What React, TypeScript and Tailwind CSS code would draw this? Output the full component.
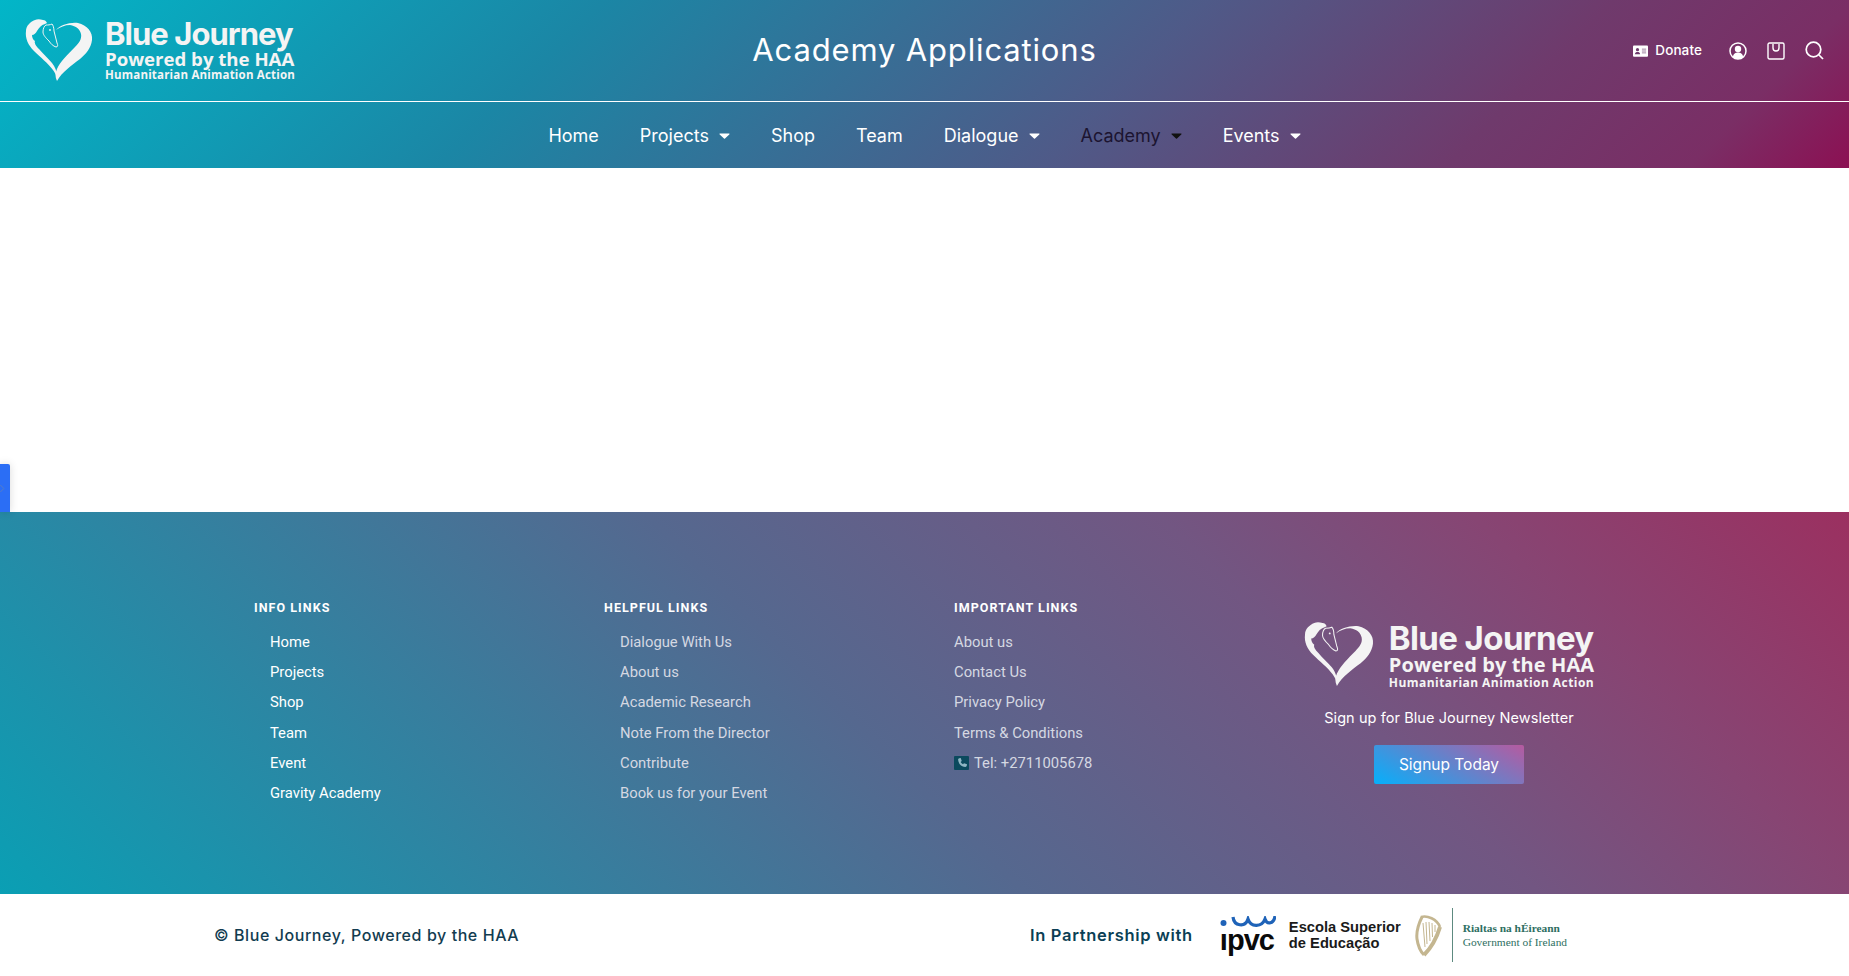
import React from "react";

const sans = "font-['Inter','Liberation_Sans',sans-serif]";

function Heart({ className }: { className: string }) {
  return (
    <svg viewBox="15 9 68 63" className={className}>
      <path fill="#f4f4f4" d="M46 20C50 15 60 12 68 13C77 15 83 22 82 30C81 38 76 44 70 49C62 55 52 62 47 71C45 67 45 63 47 59C50 52 58 44 65 37C69 33 72 29 71 24C70 19 66 16 60 15C55 15 50 17 46 20Z" />
      <path fill="#f4f4f4" d="M33 10C30 9 27 9 25 10C20 12 16 16 16 21C15 28 18 35 24 41C30 47 38 53 43 60C45 63 46 65 47 67C47 61 45 57 42 53C38 48 33 44 29 39C26 36 24 33 25 31C23 30 22 27 22 25C24 25 26 23 27 21C29 18 31 15 35 14L37 13C36 11 35 10 33 10Z" />
      <path fill="none" stroke="#f4f4f4" strokeWidth="1" d="M36 15C34 16 33 19 33 22C33 25 36 28 39 31C41 34 43 36 46 37C48 37 48 35 47 33C46 29 45 25 44 21C44 18 43 15 42 14C40 15 38 15 36 15Z" />
      <circle cx="40" cy="20" r="0.9" fill="#f4f4f4" />
    </svg>
  );
}

function Logo({ large }: { large?: boolean }) {
  return (
    <div className={large ? "flex items-start gap-[15px]" : "flex items-start gap-[12px]"}>
      <Heart className={large ? "h-[65px] w-[70px]" : "h-[63px] w-[68px]"} />
      <div className="flex flex-col text-[#f4f4f4]">
        <span
          className={
            large
              ? "font-['Inter',sans-serif] text-[33px] leading-[33px] font-bold tracking-[-0.6px] whitespace-nowrap"
              : "font-['Inter',sans-serif] text-[31px] leading-[30px] font-bold tracking-[-0.95px] whitespace-nowrap"
          }
        >
          Blue Journey
        </span>
        <span
          className={
            large
              ? "font-['Open_Sans',sans-serif] text-[20px] leading-[20px] font-bold tracking-[0.1px] whitespace-nowrap"
              : "font-['Open_Sans',sans-serif] text-[18.6px] leading-[19px] font-bold whitespace-nowrap"
          }
        >
          Powered by the HAA
        </span>
        <span
          className={
            large
              ? "font-['Open_Sans',sans-serif] text-[12px] leading-[15px] font-bold tracking-[0.45px] whitespace-nowrap"
              : "font-['Open_Sans',sans-serif] text-[11.5px] leading-[14px] font-bold tracking-[0.2px] whitespace-nowrap"
          }
        >
          Humanitarian Animation Action
        </span>
      </div>
    </div>
  );
}

function Caret({ dark }: { dark?: boolean }) {
  return (
    <svg viewBox="0 0 10 6" className="h-[6px] w-[11px]" fill={dark ? "#111" : "#fff"}>
      <path d="M0.6 0.4H9.4C10 0.4 10.2 1 9.8 1.4L5.5 5.6C5.2 5.9 4.8 5.9 4.5 5.6L0.2 1.4C-0.2 1 0 0.4 0.6 0.4Z" />
    </svg>
  );
}

function NavItem({ label, caret, dark }: { label: string; caret?: boolean; dark?: boolean }) {
  return (
    <a className={dark ? "flex items-center gap-[10px] text-[#1c1430]" : "flex items-center gap-[10px] text-white"}>
      <span>{label}</span>
      {caret && <Caret dark={dark} />}
    </a>
  );
}

function Column({ title, links, indent, muted, phone }: { title: string; links: string[]; indent?: boolean; muted?: boolean; phone?: boolean }) {
  return (
    <div className="flex flex-col">
      <h4 className="font-['Roboto',sans-serif] text-[12.5px] leading-[16px] font-bold tracking-[1.05px] text-white">{title}</h4>
      <ul className={indent ? "mt-[11px] flex flex-col pl-[16px]" : "mt-[11px] flex flex-col"}>
        {links.map((l) => (
          <li
            key={l}
            className={
              muted
                ? "font-['Roboto',sans-serif] text-[14.8px] leading-[30.2px] text-[#d5d8e2]"
                : "font-['Roboto',sans-serif] text-[14.8px] leading-[30.2px] text-white"
            }
          >
            {l}
          </li>
        ))}
        {phone && (
          <li className="flex items-center gap-[5px] font-['Roboto',sans-serif] text-[14.8px] leading-[30.2px] text-[#d5d8e2]">
            <span className="flex h-[14px] w-[15px] items-center justify-center rounded-[1px] bg-[#0b4a5e]">
              <svg viewBox="0 0 24 24" className="h-[12px] w-[12px]" fill="#8fb6c4">
                <path d="M6.6 2.5 9.4 2 11.5 8 9.3 10c1 2 2.7 3.7 4.7 4.7l2-2.2 6 2.1-.5 2.8c-.3 1.5-1.6 2.6-3.2 2.4C10.2 19 5 13.800 4.200 5.700 4 4.100 5.100 2.800 6.600 2.500Z" />
              </svg>
            </span>
            Tel: +2711005678
          </li>
        )}
      </ul>
    </div>
  );
}

export default function App() {
  return (
    <div className="relative flex min-h-[976px] w-full flex-col overflow-hidden bg-white">
      <header className="flex h-[168px] flex-col bg-[linear-gradient(135deg,#02b6c8_0%,#1b86a5_30%,#4f5a88_60%,#6f3a6c_80%,#7a2e65_92%,#8c1053_100%)]">
        <div className="flex h-[102px] items-center justify-between border-b border-white pr-[25px] pl-[25px]">
          <div className="w-[400px]">
            <Logo />
          </div>
          <h1 className={`${sans} text-[31px] font-normal tracking-[0.85px] whitespace-nowrap text-white`}>Academy Applications</h1>
          <div className="flex w-[400px] items-center justify-end">
            <a className={`${sans} flex items-center gap-[7px] text-[13.5px] font-medium tracking-[0.1px] text-white`}>
              <svg viewBox="0 0 16 12" className="h-[12px] w-[15px]">
                <rect width="16" height="12" rx="1" fill="#fff" />
                <circle cx="4.8" cy="4.600" r="1.700" fill="#6d3a6c" />
                <path d="M2 9.500C2 7.500 3.500 7 4.800 7S7.600 7.500 7.600 9.500Z" fill="#6d3a6c" />
                <path d="M9.500 4H14M9.500 6H14M9.500 8H14" stroke="#9a7d9c" strokeWidth="1" />
              </svg>
              Donate
            </a>
            <svg viewBox="0 0 18 18" className="ml-[27px] h-[18px] w-[18px]" fill="none">
              <circle cx="9" cy="9" r="8" stroke="#fff" strokeWidth="1.500" />
              <circle cx="9" cy="7" r="3.200" fill="#fff" />
              <path d="M3.800 15C4.500 11.500 6.500 10.500 9 10.500S13.500 11.500 14.200 15C11 17.500 7 17.500 3.800 15Z" fill="#fff" />
            </svg>
            <svg viewBox="0 0 18 18" className="ml-[20px] h-[18px] w-[18px]" fill="none" stroke="#fff" strokeWidth="1.400">
              <rect x="1" y="1" width="16" height="16" rx="1.500" />
              <path d="M6 2V6C6 10 12 10 12 6V2" />
            </svg>
            <svg viewBox="0 0 19 19" className="ml-[20px] h-[19px] w-[19px]" fill="none" stroke="#fff" strokeWidth="1.700">
              <circle cx="8.500" cy="8.500" r="7.300" />
              <path d="M14 14L18 18" />
            </svg>
          </div>
        </div>
        <nav className={`${sans} flex flex-1 items-center justify-center gap-[41px] pt-[1px] text-[18px] font-normal`}>
          <NavItem label="Home" />
          <NavItem label="Projects" caret />
          <NavItem label="Shop" />
          <NavItem label="Team" />
          <NavItem label="Dialogue" caret />
          <NavItem label="Academy" caret dark />
          <NavItem label="Events" caret />
        </nav>
      </header>

      <main className="h-[344px] bg-white" />
      <div className="absolute top-[464px] left-0 flex h-[48px] w-[10px] items-center rounded-tr-[2px] bg-[#2b6ef5] shadow-[0_0_8px_rgba(0,0,0,0.15)]">
        <svg viewBox="0 0 5 10" className="h-[9px] w-[5px]" fill="none" stroke="#5a7fc0" strokeWidth="1"><path d="M0 1L4 5L0 9" /></svg>
      </div>

      <footer className="flex h-[382px] bg-[linear-gradient(45deg,#0a9fb4_0%,#55688f_46%,#725682_69%,#874573_83%,#9b3060_100%)] pt-[88px] pl-[254px]">
        <div className="w-[350px]">
          <Column title="INFO LINKS" indent links={["Home", "Projects", "Shop", "Team", "Event", "Gravity Academy"]} />
        </div>
        <div className="w-[350px]">
          <Column title="HELPFUL LINKS" indent muted links={["Dialogue With Us", "About us", "Academic Research", "Note From the Director", "Contribute", "Book us for your Event"]} />
        </div>
        <div className="w-[300px]">
          <Column title="IMPORTANT LINKS" muted phone links={["About us", "Contact Us", "Privacy Policy", "Terms & Conditions"]} />
        </div>
        <div className="flex w-[390px] flex-col items-center pt-[22px]">
          <Logo large />
          <p className={`${sans} mt-[18px] text-[14.5px] leading-[20px] tracking-[0.08px] text-white`}>Sign up for Blue Journey Newsletter</p>
          <a className={`${sans} mt-[17px] flex h-[39px] w-[150px] items-center justify-center rounded-[2px] bg-[linear-gradient(30deg,#05b0fb_0%,#7a78c0_65%,#b65a9f_100%)] text-[15.500px] text-white`}>Signup Today</a>
        </div>
      </footer>

      <div className={`${sans} flex h-[82px] items-center bg-white pl-[214px] text-[#123c50]`}>
        <span className="w-[816px] text-[16px] font-medium tracking-[0.57px]">© Blue Journey, Powered by the HAA</span>
        <span className="text-[16.500px] font-semibold tracking-[0.68px] text-[#0b3f55]">In Partnership with</span>
        <div className="ml-[27px] flex w-[56px] flex-col items-start">
          <svg viewBox="0 0 56 12" className="h-[12px] w-[56px]" fill="none" stroke="#1f63b8" strokeWidth="3.200">
            <circle cx="3.500" cy="7" r="3" fill="#1f63b8" stroke="none" />
            <path d="M13 1C14 10 25 12 28 3C31 12 42 11 45 3C47 9 54 8 55 0" />
          </svg>
          <span className="mt-[-3px] font-['Liberation_Sans',sans-serif] text-[29px] leading-[30px] font-bold tracking-[-1px] text-[#0a0a0a]">ıpvc</span>
        </div>
        <div className="ml-[13px] flex flex-col font-['Liberation_Sans',sans-serif] text-[14.7px] leading-[16px] font-bold text-[#1a1a1a]">
          <span>Escola Superior</span>
          <span>de Educação</span>
        </div>
        <svg viewBox="0 0 27 43" className="ml-[14px] h-[43px] w-[27px]" fill="none" stroke="#c4b690">
          <path d="M7 3C4 9 1 17 2 25C3 32 6 38 9 41" strokeWidth="3" />
          <path d="M6 3C12 1 22 5 25 13" strokeWidth="2.500" />
          <path d="M25 13C22 23 16 34 9 41" strokeWidth="4" />
          <path d="M8 9L10 33M11 8L12 30M14 8L15 27M17 9L17.500 23M20 11L20 18" strokeWidth="1" />
        </svg>
        <div className="ml-[10px] h-[54px] w-px bg-[#5d8a80]" />
        <div className="ml-[10px] flex flex-col font-['Liberation_Serif',serif] text-[11.400px] leading-[14px] text-[#2e6f62]">
          <span className="font-bold">Rialtas na hÉireann</span>
          <span>Government of Ireland</span>
        </div>
      </div>
    </div>
  );
}
